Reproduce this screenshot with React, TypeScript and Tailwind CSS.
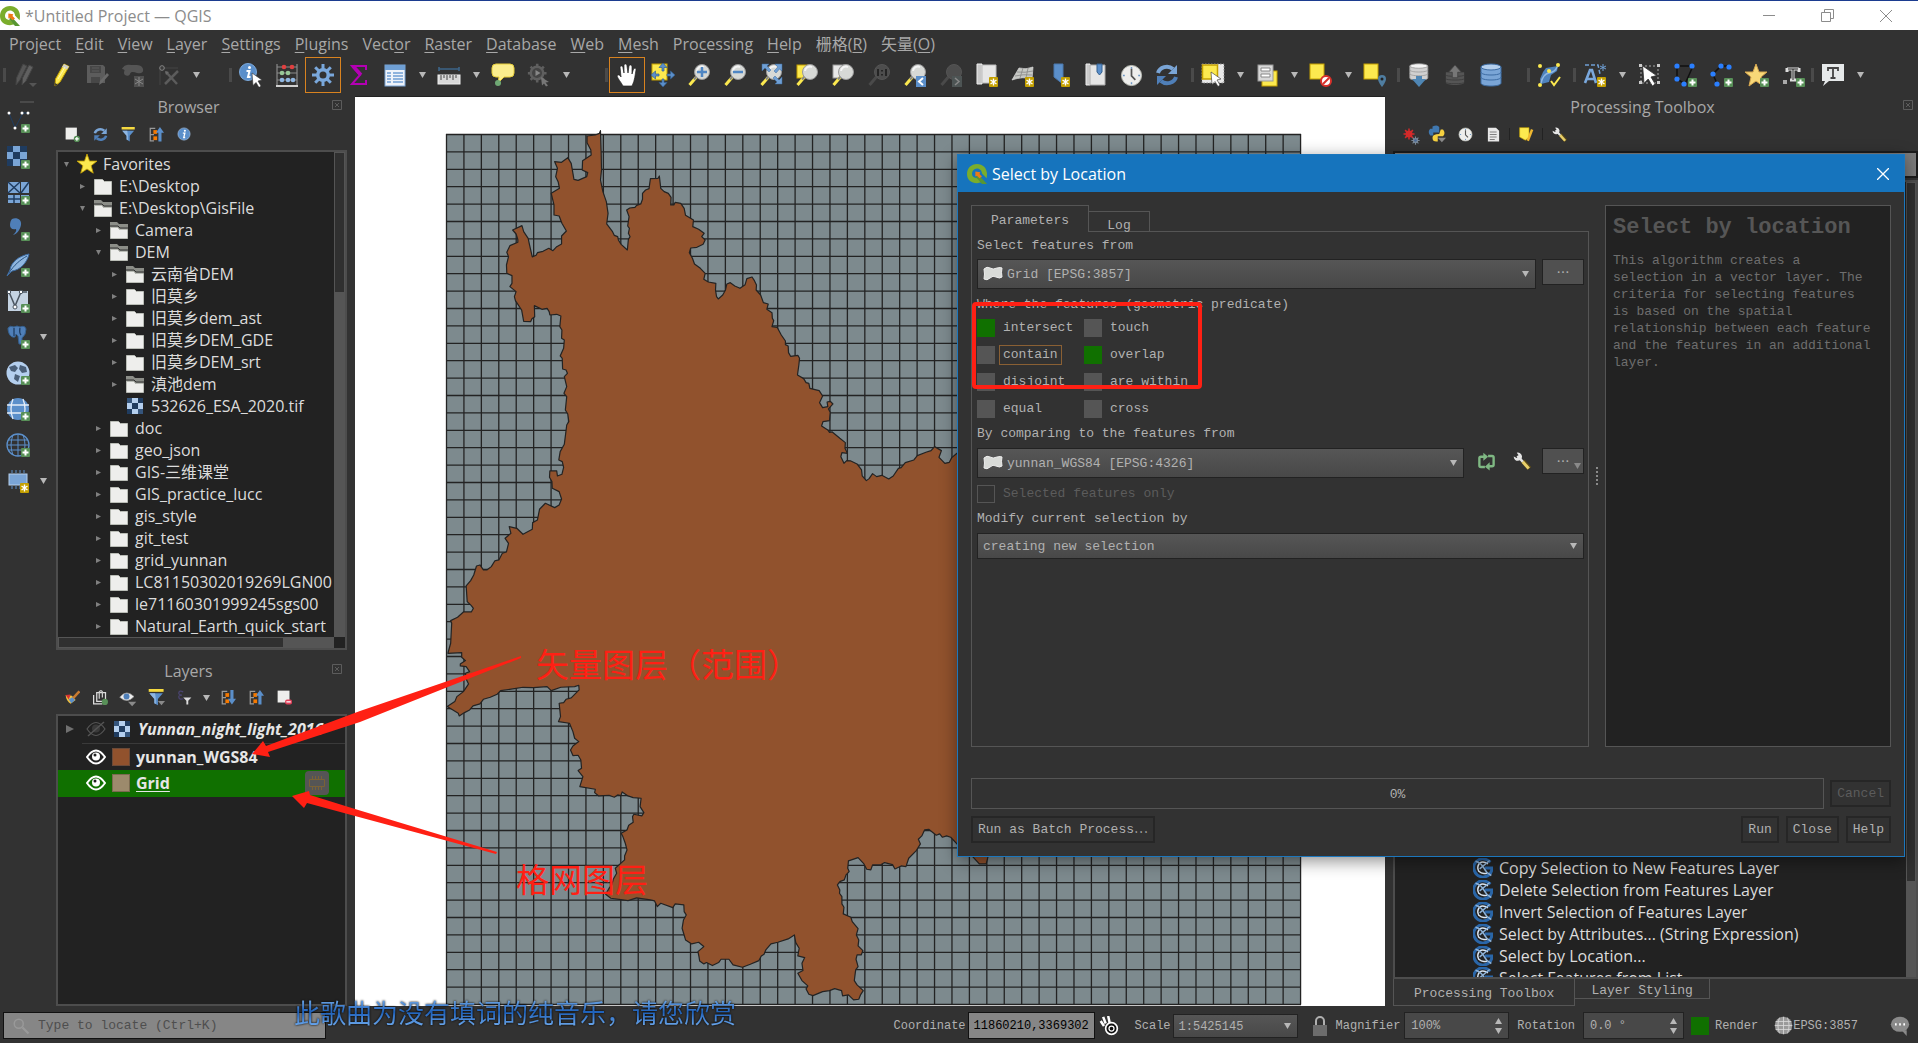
import type { ReactNode } from 'react';
import clsx from 'clsx';

/* ---------- icon primitives, all on a 24x24 grid ---------- */

function Svg({ children, size = 24 }: { children: ReactNode; size?: number }) {
  return (
    <svg width={size} height={size} viewBox="0 0 24 24" fill="none" className="shrink-0">
      {children}
    </svg>
  );
}

function Caret({ up, className = 'fill-[#b8b8b8]' }: { up?: boolean; className?: string }) {
  return (
    <svg width="7" height="6" viewBox="0 0 7 6" className={clsx('shrink-0', className)}>
      <path d={up ? 'M3.5 0L7 6H0z' : 'M0 0h7L3.5 6z'} />
    </svg>
  );
}

const Plus = () => (
  <g>
    <rect x="15" y="15" width="9" height="9" rx="1" fill="#589058" />
    <path d="M19.500 16.500v6M16.500 19.500h6" stroke="#fff" strokeWidth="2" />
  </g>
);

const Spark = () => (
  <g>
    <rect x="14" y="14" width="9" height="10" rx="1" fill="#c4a000" />
    <path d="M18.500 15.500v7M15.500 17l6 4M21.500 17l-6 4" stroke="#fff" strokeWidth="1.400" />
  </g>
);

function Lens({ dim, children, behind }: { dim?: boolean; children?: ReactNode; behind?: ReactNode }) {
  return (
    <Svg>
      {behind}
      <path d="M9 14.500L2.500 22" stroke={dim ? '#4a4a4a' : '#fce94f'} strokeWidth="3" />
      <path d="M10 13L7 16.500" stroke={dim ? '#4a4a4a' : '#888'} strokeWidth="2" />
      <circle cx="15" cy="9" r="7.500" fill={dim ? '#4d4d4d' : '#d7d9d6'} stroke={dim ? '#555' : '#999'} />
      {!dim && <path d="M10 8a5 5 0 0 1 7-4" stroke="#f4f4f4" strokeWidth="2" />}
      {children}
    </Svg>
  );
}

const gearTeeth = 'M12 1v22M1 12h22M4.200 4.200l15.600 15.600M19.800 4.200L4.200 19.800';

function Gear({ color, hole, size = 24 }: { color: string; hole: string; size?: number }) {
  return (
    <Svg size={size}>
      <path d={gearTeeth} stroke={color} strokeWidth="3" />
      <circle cx="12" cy="12" r="7" fill={color} />
      <circle cx="12" cy="12" r="3.500" fill={hole} />
    </Svg>
  );
}

const Cursor = ({ x = 12, y = 10 }: { x?: number; y?: number }) => (
  <path
    transform={`translate(${x} ${y})`}
    d="M0 0l10 7-4 1 3 5-2 1.500-3-5-3 3z"
    fill="#fff"
    stroke="#333"
    strokeWidth=".6"
  />
);

const Pencil = ({ color = '#fce94f', dark = '#c4a000' }) => (
  <g>
    <path d="M15 1l5 2.500L11 19l-5 4 .5-7z" fill={color} stroke={dark} />
    <path d="M15 1l5 2.500-2 3-5-2.500z" fill="#d0d0c8" />
    <path d="M9 16l7-12" stroke="#fff7b0" />
    <path d="M6 23l.3-3 2.200 1.400z" fill="#333" />
  </g>
);

const Database = ({ color = '#7aa5d6', line = '#3d6ca3', top = '#b4cfee' }) => (
  <g fill={color} stroke={line}>
    <path d="M2 4v16c0 2 4.500 3 10 3s10-1 10-3V4z" />
    <ellipse cx="12" cy="4" rx="10" ry="3" fill={top} />
    <path d="M2 9c0 2 4.500 3 10 3s10-1 10-3M2 14c0 2 4.500 3 10 3s10-1 10-3" fill="none" />
  </g>
);

function RefreshIcon({ size = 24 }: { size?: number }) {
  return (
    <Svg size={size}>
      <path d="M3 10a9 8 0 0 1 15-4" stroke="#7aa5d6" strokeWidth="4" />
      <path d="M22 2v9h-9z" fill="#7aa5d6" />
      <path d="M21 14a9 8 0 0 1-15 4" stroke="#4f7fb8" strokeWidth="4" />
      <path d="M2 22v-9h9z" fill="#4f7fb8" />
    </Svg>
  );
}

function InfoIcon({ size = 24 }: { size?: number }) {
  return (
    <Svg size={size}>
      <circle cx="12" cy="12" r="10.500" fill="#5b8fca" stroke="#a9c6e8" />
      <circle cx="13.500" cy="6.500" r="1.800" fill="#fff" />
      <path d="M10 10.500h3.500L11.500 18h2.500" stroke="#fff" strokeWidth="2.200" />
    </Svg>
  );
}

function ClockIcon({ size = 24 }: { size?: number }) {
  return (
    <Svg size={size}>
      <circle cx="12" cy="12" r="10.500" fill="#eeeeec" stroke="#babdb6" />
      <path d="M12 3v2M12 19v2M3 12h2M19 12h2" stroke="#6d97c4" strokeWidth="1.500" />
      <path d="M12 5v7.500l4 4" stroke="#555" strokeWidth="1.800" />
    </Svg>
  );
}

function FunnelIcon({ size = 24, drop }: { size?: number; drop?: boolean }) {
  return (
    <Svg size={size}>
      <rect x="1" y="0" width="21" height="4" fill="#f5d940" />
      <path d="M2 6h19l-7 8v9l-5-3v-6z" fill="#5b8fca" />
      <path d="M2 6h8l1 8v7l-2-1v-6z" fill="#90b7e2" />
      {drop && <path d="M14 17h10l-5 6z" fill="#8a8a8a" />}
    </Svg>
  );
}

function TreeArrowIcon({ down }: { down?: boolean }) {
  return (
    <Svg size={15}>
      <path d="M2 1v22M2 2h8M2 12h6M2 22h6" stroke="#9a9a9a" strokeWidth="2" />
      <rect x="7" y="5" width="6" height="6" fill="#f57900" />
      <rect x="7" y="15" width="6" height="6" fill="#f57900" />
      {down ? (
        <path d="M15 0h5v14h4l-6.500 9L11 14h4z" fill="#5b8fca" />
      ) : (
        <path d="M15 23h5V9h4L17.500 0 11 9h4z" fill="#5b8fca" />
      )}
    </Svg>
  );
}

function WrenchIcon({ size = 18 }: { size?: number }) {
  return (
    <Svg size={size}>
      <path d="M13 12l9 10" stroke="#5a4a18" strokeWidth="6" />
      <path d="M13 13l8 9" stroke="#e8cf6a" strokeWidth="4" />
      <path d="M6 5l7 8" stroke="#e6e6e6" strokeWidth="3.500" />
      <path d="M5 1a5.500 5.500 0 1 1-4 5l4 2 3-3z" fill="#e6e6e6" />
    </Svg>
  );
}

function QgisLogo() {
  return (
    <Svg size={20}>
      <path d="M12 0C5 0 0 5 0 12s5 11 12 11c2 0 3.500-.4 5-1l-4.500-5C8.500 17 6 15 6 12s2.500-6.500 6-6.500 6 3 6 6l5.500 5.500c.3-1.500.5-3 .5-5C24 5 19 0 12 0z" fill="#7aad2c" />
      <path d="M13 12l11 12h-6l-7-8z" fill="#589632" />
      <path d="M10 9l6 1-1 2 3 3-3 2-3-3-2 1z" fill="#ee7913" />
    </Svg>
  );
}

const Dots = ({ points }: { points: number[][] }) => (
  <g fill="#2a7fff">
    {points.map(([x, y]) => (
      <circle key={`${x}-${y}`} cx={x} cy={y} r="2.600" />
    ))}
  </g>
);

/* ---------- toolbar ---------- */

function ToolButton({ label, active, children }: { label: string; active?: boolean; children: ReactNode }) {
  return (
    <button
      type="button"
      aria-label={label}
      className={clsx('flex h-9 w-9 shrink-0 items-center justify-center', active && 'border border-[#d8821f]')}
    >
      {children}
    </button>
  );
}

const Drop = () => (
  <button type="button" aria-label="More" className="flex h-9 w-[18px] shrink-0 items-center justify-center">
    <Caret />
  </button>
);

const Handle = () => <span className="mr-px h-[14px] w-[3px] shrink-0 bg-[#4a4a4a]" />;

function MainToolbar() {
  return (
    <div className="flex h-[39px] shrink-0 items-center overflow-hidden pb-[3px] pl-[3px]">
      <div className="flex items-center">
        <Handle />
        <ToolButton label="Current Edits">
          <Svg>
            <path d="M10 1l4 2-7 14-4 5 .5-7z" fill="#565656" stroke="#444" />
            <path d="M16 2l4 2-7 14-4 4 .5-7z" fill="#606060" stroke="#444" />
            <path d="M16 20h8l-4 4z" fill="#555" />
          </Svg>
        </ToolButton>
        <ToolButton label="Toggle Editing"><Svg><Pencil /></Svg></ToolButton>
        <ToolButton label="Save Layer Edits">
          <Svg>
            <path d="M2 2h16l2 2v16H2z" fill="#5c5c5c" />
            <path d="M5 3h11v7H5zM6 14h9v6H6z" fill="#474747" />
            <path d="M7 5h7M7 8h7" stroke="#5c5c5c" />
            <path d="M22 10l2 2-7 8-3 2 1-4z" fill="#6a6a6a" />
          </Svg>
        </ToolButton>
        <ToolButton label="Add Polygon">
          <Svg>
            <path d="M1 6c3-6 8-4 12-4s8 0 9 4-3 5-6 4-6-2-7 1-6 2-6-1 2-3-2-4z" fill="#555" />
            <rect x="13" y="13" width="10" height="11" fill="#505050" />
            <path d="M18 14v9M14 16l8 5M22 16l-8 5" stroke="#888" />
          </Svg>
        </ToolButton>
        <ToolButton label="Vertex Tool">
          <Svg>
            <path d="M3 22V5h18" stroke="#444" />
            <circle cx="5" cy="5" r="2.300" stroke="#888" />
            <path d="M8 21L21 8M9 9l11 12" stroke="#5c5c5c" strokeWidth="2.500" />
            <path d="M8 8l4 1-3 3z" fill="#6a6a6a" />
          </Svg>
        </ToolButton>
        <Drop />
      </div>

      <div className="ml-6 flex items-center">
        <Handle />
        <ToolButton label="Identify Features">
          <Svg>
            <circle cx="9" cy="9" r="8.500" fill="#5b8fca" stroke="#7ba8da" />
            <circle cx="10.500" cy="4.500" r="1.500" fill="#fff" />
            <path d="M7.500 8h3L9 14h2.500" stroke="#fff" strokeWidth="2" />
            <Cursor x={13} y={10} />
          </Svg>
        </ToolButton>
        <ToolButton label="Field Calculator">
          <Svg>
            <path d="M2 1v21M22 1v21M2 4h20M2 10h20M2 17h20" stroke="#8a8a8a" strokeWidth="1.200" />
            <path d="M1 23h22" stroke="#d0d0d0" strokeWidth="2" />
            <g fill="#e04040"><circle cx="9" cy="4" r="2.300" /><circle cx="17" cy="4" r="2.300" /></g>
            <g fill="#98c898"><circle cx="7" cy="10" r="2.300" /><circle cx="13" cy="10" r="2.300" /></g>
            <g fill="#90b7e2"><circle cx="7" cy="17" r="2.300" /><circle cx="13" cy="17" r="2.300" /><circle cx="18" cy="17" r="2.300" /></g>
          </Svg>
        </ToolButton>
        <ToolButton label="Toolbox" active><Gear color="#7aa8dc" hole="#323232" /></ToolButton>
        <ToolButton label="Statistical Summary">
          <Svg>
            <path d="M19 7V3H5l8 9-8 9h14v-4" stroke="#b400b4" strokeWidth="2" />
            <path d="M6 3l8 9" stroke="#b400b4" strokeWidth="3.500" />
          </Svg>
        </ToolButton>
        <ToolButton label="Attribute Table">
          <Svg>
            <rect x="2" y="2" width="20" height="21" fill="#eef3fa" stroke="#7aa5d6" />
            <rect x="2" y="2" width="20" height="5" fill="#6f9fd4" />
            <path d="M4 10h4M10 10h10M4 13h4M10 13h10M4 16h4M10 16h10M4 19h4M10 19h10" stroke="#6f9fd4" strokeWidth="1.500" />
          </Svg>
        </ToolButton>
        <Drop />
        <ToolButton label="Measure">
          <Svg>
            <path d="M2 6h20M2 4v4M22 4v4" stroke="#3d6488" strokeWidth="1.600" />
            <rect x="1" y="12" width="22" height="9" fill="#d8d8d8" stroke="#eee" />
            <path d="M4 12v5M7 12v3M10 12v5M13 12v3M16 12v5M19 12v3" stroke="#444" />
          </Svg>
        </ToolButton>
        <Drop />
        <ToolButton label="Map Tips">
          <Svg>
            <path d="M5 1h14q4 0 4 4v5q0 4-4 4h-6l-6 6 1-6H5q-4 0-4-4V5q0-4 4-4z" fill="#fbee8e" stroke="#e8cf3a" />
            <circle cx="7" cy="20" r="3" fill="#6fa874" />
          </Svg>
        </ToolButton>
        <ToolButton label="Run Feature Action">
          <Svg>
            <path d={gearTeeth} stroke="#5f5f5f" strokeWidth="3" transform="scale(.85)" />
            <circle cx="10" cy="10" r="7.500" fill="#5f5f5f" />
            <circle cx="10" cy="10" r="5" fill="#444" />
            <path d="M8.500 7l5 3-5 3z" fill="#888" />
            <path d="M14 14l8 5-3.500.5 2.500 3-2 1-2-3-2 2z" fill="#777" />
          </Svg>
        </ToolButton>
        <Drop />
      </div>

      <div className="ml-7.5 flex items-center">
        <Handle />
        <ToolButton label="Pan Map" active>
          <Svg>
            <path d="M8 23c-2-4-5-7-6-10 1-2 3-1 4 1L5 4c1-2 3-1 3 1l1 5V2c1-2 3-1 3 1l1 7 1-7c1-2 3-1 3 1v7l1.500-5c1-1 3-1 2.500 1-1 5-1 10-4 16z" fill="#fff" stroke="#222" strokeWidth=".7" />
          </Svg>
        </ToolButton>
        <ToolButton label="Pan Map to Selection">
          <Svg>
            <rect x="1" y="1" width="15" height="16" fill="#fce94f" stroke="#c4a000" />
            <path d="M12 0l4 4.500h-3V8h-2V4.500H8zM12 24l-4-4.500h3V16h2v3.500h3zM0 12l4.500-4v3H8v2H4.500v3zM24 12l-4.500 4v-3H16v-2h3.500V8z" fill="#5b8fca" stroke="#35608f" strokeWidth=".7" />
          </Svg>
        </ToolButton>
        <ToolButton label="Zoom In"><Lens><path d="M15 4v10M10 9h10" stroke="#4f86c4" strokeWidth="2.500" /></Lens></ToolButton>
        <ToolButton label="Zoom Out"><Lens><path d="M10 9h10" stroke="#4f86c4" strokeWidth="2.500" /></Lens></ToolButton>
        <ToolButton label="Zoom Full">
          <Lens>
            <path d="M3 1h7L8 3l4 4-2 2-4-4-3 3zM23 1v7l-2.500-2L17 10l-2-2 4-4-3-3zM23 21h-7l2-2-4-4 2-2 4 4 3-3z" fill="#6f9fd4" stroke="#3d6ca3" strokeWidth=".5" />
          </Lens>
        </ToolButton>
        <ToolButton label="Zoom to Selection"><Lens behind={<rect x="2" y="2" width="12" height="13" fill="#fce94f" stroke="#c4a000" />} /></ToolButton>
        <ToolButton label="Zoom to Layer"><Lens behind={<rect x="2" y="2" width="12" height="13" fill="#e8e8e8" stroke="#999" />} /></ToolButton>
        <ToolButton label="Zoom to Native Resolution">
          <Lens dim><path d="M11 6v7M19 6v7M15 7v1.500M15 11v1.500" stroke="#222" strokeWidth="1.800" /></Lens>
        </ToolButton>
        <ToolButton label="Zoom Last">
          <Lens>
            <rect x="13" y="13" width="10" height="11" fill="#5b8fca" />
            <path d="M20 15l-4 3.500 4 3.500" stroke="#fff" strokeWidth="2" />
          </Lens>
        </ToolButton>
        <ToolButton label="Zoom Next">
          <Lens dim>
            <rect x="13" y="13" width="10" height="11" fill="#4d5454" />
            <path d="M16 15l4 3.500-4 3.500" stroke="#888" strokeWidth="1.500" />
          </Lens>
        </ToolButton>
        <ToolButton label="New Map View">
          <Svg><path d="M2 1h5v20H2z" fill="#c8c8c8" stroke="#eee" /><path d="M7 2h14v18H7z" fill="#e6e6e6" stroke="#bbb" /><Spark /></Svg>
        </ToolButton>
        <ToolButton label="New 3D Map View">
          <Svg>
            <path d="M8 5q7 2 14-1l-1 12q-9-3-20 1z" fill="#c6c8c4" stroke="#ddd" strokeWidth=".7" />
            <path d="M6 9q8 1 16-1M4 13q8-2 17-1M12 5L9 15M17 5l-2 10" stroke="#888" strokeWidth=".8" />
            <Spark />
          </Svg>
        </ToolButton>
        <ToolButton label="New Spatial Bookmark">
          <Svg><path d="M7 1h9v20l-4-3-5-4z" fill="#5b8fca" stroke="#4a78ad" /><Spark /></Svg>
        </ToolButton>
        <ToolButton label="Show Spatial Bookmarks">
          <Svg>
            <path d="M3 1h4v21H3z" fill="#ccc" stroke="#eee" />
            <path d="M7 2h15v20H7z" fill="#e6e6e6" stroke="#aaa" />
            <path d="M14 1h5v8l-2.500 3L14 9z" fill="#5b8fca" stroke="#35608f" />
          </Svg>
        </ToolButton>
        <ToolButton label="Temporal Controller"><ClockIcon size={23} /></ToolButton>
        <ToolButton label="Refresh"><RefreshIcon /></ToolButton>
      </div>

      <div className="ml-1.5 flex items-center">
        <Handle />
        <ToolButton label="Select Features">
          <Svg>
            <rect x="1" y="1" width="22" height="19" fill="#e8e8e8" stroke="#888" strokeDasharray="1.500 1.500" />
            <rect x="1.500" y="2" width="15" height="14" fill="#fce94f" stroke="#c4a000" strokeWidth="1.500" />
            <Cursor x={10} y={9} />
          </Svg>
        </ToolButton>
        <Drop />
        <ToolButton label="Select by Value">
          <Svg>
            <rect x="7" y="8" width="15" height="15" fill="#fce94f" stroke="#c4a000" />
            <rect x="3" y="2" width="15" height="16" fill="#d8d8d8" stroke="#999" />
            <path d="M6 5h9v3H6zM6 11h9v3H6z" fill="#fff" stroke="#888" />
          </Svg>
        </ToolButton>
        <Drop />
        <ToolButton label="Deselect Features">
          <Svg>
            <rect x="1" y="1" width="14" height="15" fill="#fce94f" stroke="#c4a000" />
            <circle cx="17" cy="18" r="5" fill="#fff" stroke="#d8302a" strokeWidth="2" />
            <path d="M14 21l6-6" stroke="#d8302a" strokeWidth="2" />
          </Svg>
        </ToolButton>
        <Drop />
        <ToolButton label="Select by Location">
          <Svg>
            <rect x="1" y="1" width="14" height="15" fill="#fce94f" stroke="#c4a000" />
            <path d="M19 12a4 4 0 0 1 4 4c0 3-4 8-4 8s-4-5-4-8a4 4 0 0 1 4-4z" fill="#4f7da0" />
            <circle cx="19" cy="16" r="1.500" fill="#222" />
          </Svg>
        </ToolButton>
      </div>

      <div className="ml-1 flex items-center">
        <Handle />
        <ToolButton label="Import Layer">
          <Svg>
            <g transform="translate(1 0) scale(.9 .75)"><Database color="#d0d0d0" line="#9a9a9a" top="#f4f4f4" /></g>
            <path d="M9 13h6v3h4l-7 8-7-8h4z" fill="#4f86b4" />
          </Svg>
        </ToolButton>
        <ToolButton label="Export Layer">
          <Svg size={22}>
            <path d="M2 9v11c0 2 4.500 3 10 3s10-1 10-3V9z" fill="#555" />
            <path d="M2 12c0 2 20 2 20 0M2 16c0 2 20 2 20 0M2 20c0 2 20 2 20 0" stroke="#3c3c3c" />
            <path d="M12 1l7 8h-4v6H9V9H5z" fill="#777" stroke="#444" />
          </Svg>
        </ToolButton>
        <ToolButton label="DB Manager"><Svg><Database /></Svg></ToolButton>
      </div>

      <div className="ml-[18px] flex items-center">
        <Handle />
        <ToolButton label="Check Geometry">
          <Svg>
            <path d="M9 5l12-2-1 5-6 4-2 7-8 2-1-5 3-7z" fill="#4f83bd" />
            <path d="M4 20q2-9 8-10t8-6" stroke="#90b7e2" strokeWidth="1.500" />
            <g fill="#fce94f"><circle cx="3" cy="3" r="2" /><circle cx="21" cy="2" r="2" /><circle cx="12" cy="8" r="2" /><circle cx="3" cy="22" r="2" /></g>
            <path d="M14 18l3 4 6-8" stroke="#fce94f" strokeWidth="2" />
          </Svg>
        </ToolButton>
      </div>

      <div className="ml-1.5 flex items-center">
        <Handle />
        <ToolButton label="New Annotation Layer">
          <Svg>
            <path d="M2 2h13l2 9" stroke="#6f9fd4" strokeWidth="1.500" strokeDasharray="4 2" />
            <path d="M2 20L7 7h2l4 13M4 16h7" stroke="#7aa8dc" strokeWidth="2.600" />
            <path d="M20 1v7M17 3l6 3M23 3l-6 3" stroke="#6f9fd4" />
            <Spark />
          </Svg>
        </ToolButton>
        <Drop />
        <ToolButton label="Modify Annotations">
          <Svg>
            <rect x="4" y="3" width="17" height="17" stroke="#aaa" strokeDasharray="2 2" />
            <g fill="#ccc"><rect x="2" y="1" width="3" height="3" /><rect x="20" y="1" width="3" height="3" /><rect x="2" y="18" width="3" height="3" /><rect x="20" y="18" width="3" height="3" /></g>
            <g transform="scale(1.400)"><Cursor x={4} y={2} /></g>
          </Svg>
        </ToolButton>
        <ToolButton label="Polygon Annotation">
          <Svg><path d="M4 3h16l-8 18-8-5z" stroke="#111" strokeWidth="1.500" /><Dots points={[[4, 3], [19, 3], [4, 16], [11, 21]]} /><Plus /></Svg>
        </ToolButton>
        <ToolButton label="Line Annotation">
          <Svg><path d="M20 3h-8l-8 8 4 10" stroke="#111" strokeWidth="1.500" /><Dots points={[[12, 3], [20, 4], [4, 11], [8, 21]]} /><Plus /></Svg>
        </ToolButton>
        <ToolButton label="Marker Annotation">
          <Svg><path d="M11 1l3 8h8l-6 5 2 9-7-5-7 5 2-9-6-5h8z" fill="#f8d878" stroke="#d8a850" /><Plus /></Svg>
        </ToolButton>
        <ToolButton label="Text Annotation">
          <Svg>
            <path d="M6 6h12M6 5v4M18 5v4M12 6v11M9 17h6" stroke="#ddd" strokeWidth="3" />
            <path d="M12 6v11M7 6h10" stroke="#222" />
            <rect x="2" y="17" width="4" height="4" fill="#aaa" />
            <Plus />
          </Svg>
        </ToolButton>
        <Handle />
        <ToolButton label="Text Annotation At Point">
          <Svg>
            <path d="M1 1h22v17H8l-6 5 2-5H1z" fill="#e6e9ea" />
            <path d="M7 5h10M7 4v4M17 4v4M12 5v10M9.500 15h5" stroke="#444" strokeWidth="1.800" />
          </Svg>
        </ToolButton>
        <Drop />
      </div>
    </div>
  );
}

function LayerSourceBar() {
  return (
    <div className="flex w-14 shrink-0 flex-col">
      <span className="mt-[5px] ml-5 h-[2px] w-[14px] bg-[#4a4a4a]" />
      <SourceButton label="Add Vector Layer">
        <path d="M3 4l6 15L17 4h5" stroke="#1f3c60" />
        <g fill="#fff"><circle cx="3" cy="4" r="1.500" /><circle cx="9" cy="19" r="1.500" /><circle cx="16" cy="4" r="1.500" /><circle cx="22" cy="4" r="1.500" /></g>
        <Plus />
      </SourceButton>
      <SourceButton label="Add Raster Layer">
        <rect x="1" y="1" width="20" height="20" fill="#1f3c60" />
        <path d="M7 1h7v6H7zM1 7h6v7H1zM14 7h7v7h-7zM7 14h7v7H7z" fill="#7aa5d6" />
        <Plus />
      </SourceButton>
      <SourceButton label="Add Mesh Layer">
        <path d="M2 1h12v11H2zM15 1h8v11h-8zM2 14h12v8H2zM15 14h8v8h-8z" fill="#7aa5d6" />
        <path d="M2 1l12 11M14 1L2 12M23 1l-8 11M2 18h12M8 14v8" stroke="#1f3c60" strokeWidth="1.500" />
        <Plus />
      </SourceButton>
      <SourceButton label="Add Delimited Text Layer">
        <path d="M6 2c5-2 10 1 9 6s-4 9-8 10c2-2 4-4 3-6-4 1-6-1-6-4s1-5 2-6z" fill="#4f7fb8" />
        <Plus />
      </SourceButton>
      <SourceButton label="Add SpatiaLite Layer">
        <path d="M23 1C13 3 5 9 4 17l-3 6 5-5c8-1 15-8 17-17z" fill="#8fb6df" stroke="#3d6ca3" />
        <path d="M3 20C8 12 14 7 21 3" stroke="#2a5584" />
        <Plus />
      </SourceButton>
      <SourceButton label="Add Virtual Layer">
        <path d="M2 2h20v20H2z" fill="#c4d3e2" />
        <path d="M3 3l6 14L15 3h6" stroke="#4a5560" strokeWidth="1.500" />
        <g fill="#fff" stroke="#4a5560"><circle cx="3" cy="3" r="1.700" /><circle cx="9" cy="18" r="2" /><circle cx="15" cy="3" r="1.700" /></g>
        <Plus />
      </SourceButton>
      <SourceButton label="Add PostGIS Layer" menu>
        <path d="M2 3q2-3 6-1 3-2 6 0 5-2 6 2 0 6-4 9v6h-3l-1-8-2-2-1 3c-4 1-7-3-7-9z" fill="#4f7fb8" stroke="#35608f" />
        <path d="M8 3v8M14 3q-1 5 1 7" stroke="#1f3c60" strokeWidth="1.300" />
        <Plus />
      </SourceButton>
      <SourceButton label="Add WMS Layer">
        <circle cx="12" cy="12" r="11.500" fill="#b4cfee" />
        <path d="M3 6l6-2 3 3-3 4-4-1zM14 4l6 2 1 5-5 1-3-4zM9 13l5 2-2 6-4-3z" fill="#4a5f78" />
        <Plus />
      </SourceButton>
      <SourceButton label="Add WFS Layer">
        <circle cx="12" cy="12" r="11" fill="#5b8fca" />
        <path d="M1 8h22M1 16h22M7 2q-4 10 0 20M17 2q4 10 0 20" stroke="#e6eef8" strokeWidth="1.300" />
        <Plus />
      </SourceButton>
      <SourceButton label="Add WCS Layer">
        <circle cx="12" cy="12" r="11" stroke="#5b8fca" strokeWidth="1.300" />
        <path d="M2 7h20M1 12h22M2 17h20M12 1v22M7 2q-4 10 0 20M17 2q4 10 0 20" stroke="#5b8fca" />
        <Plus />
      </SourceButton>
      <SourceButton label="New Temporary Layer" menu>
        <path d="M6 1v3M10 1v3M14 1v3M18 1v3M6 17v3M10 17v3M14 17v3" stroke="#5b8fca" />
        <rect x="3" y="5" width="18" height="11" fill="#7aa5d6" stroke="#b4cfee" />
        <Spark />
      </SourceButton>
    </div>
  );
}

function SourceButton({ label, menu, children }: { label: string; menu?: boolean; children: ReactNode }) {
  return (
    <div className="flex h-9 items-center">
      <button type="button" aria-label={label} className="flex h-9 w-9 items-center justify-center">
        <Svg>{children}</Svg>
      </button>
      {menu && (
        <button type="button" aria-label={`${label} menu`} className="ml-1">
          <Caret />
        </button>
      )}
    </div>
  );
}

/* ---------- docks ---------- */

function DockTitle({ title }: { title: string }) {
  return (
    <div className="flex h-[22px] shrink-0 items-center">
      <h2 className="flex-1 text-center text-[16px] text-[#a8a8a8]">{title}</h2>
      <button type="button" aria-label={`Close ${title}`} className="mb-1 w-[26px] pl-[11px]">
        <svg width="10" height="10" viewBox="0 0 10 10" fill="none" stroke="#5c5c5c">
          <path d="M.5.5h9v9h-9zM3 3l4 4M7 3L3 7" />
        </svg>
      </button>
    </div>
  );
}

function MiniButton({ label, children }: { label: string; children: ReactNode }) {
  return (
    <button type="button" aria-label={label} className="flex h-7 w-7 items-center justify-center">
      {children}
    </button>
  );
}

const Folder = ({ open }: { open?: boolean }) => (
  <svg width="18" height="17" viewBox="0 0 18 17" className="shrink-0">
    {open && <path d="M0 0h7l2 2h9v5H0z" fill="#8c8e88" />}
    {open && <path d="M0 4h8l2 2h8" stroke="#333" fill="none" />}
    <path d={open ? 'M.5 5.500h7l2 2h8v9H.5z' : 'M.5 1.500h8l2 2h7v13H.5z'} fill="#eeeeec" stroke="#babdb6" />
  </svg>
);

const RasterIcon = () => (
  <svg width="16" height="16" viewBox="0 0 16 16" className="shrink-0">
    <rect width="16" height="16" fill="#1f3c60" />
    <path d="M5 0h6v5H5zM0 5h5v6H0zM11 5h5v6h-5zM5 11h6v5H5z" fill="#b4cfee" />
    <path d="M0 0h5v5H0zM11 11h5v5h-5z" fill="#35557c" />
  </svg>
);

type Node = { name: string; level: number; open?: boolean; icon?: 'star' | 'folder' | 'linked' | 'raster' };

const tree: Node[] = [
  { name: 'Favorites', level: 0, open: true, icon: 'star' },
  { name: 'E:\\Desktop', level: 1, icon: 'folder' },
  { name: 'E:\\Desktop\\GisFile', level: 1, open: true, icon: 'linked' },
  { name: 'Camera', level: 2, icon: 'linked' },
  { name: 'DEM', level: 2, open: true, icon: 'linked' },
  { name: '云南省DEM', level: 3, icon: 'linked' },
  { name: '旧莫乡', level: 3, icon: 'folder' },
  { name: '旧莫乡dem_ast', level: 3, icon: 'folder' },
  { name: '旧莫乡DEM_GDE', level: 3, icon: 'folder' },
  { name: '旧莫乡DEM_srt', level: 3, icon: 'folder' },
  { name: '滇池dem', level: 3, icon: 'linked' },
  { name: '532626_ESA_2020.tif', level: 3, icon: 'raster' },
  { name: 'doc', level: 2, icon: 'folder' },
  { name: 'geo_json', level: 2, icon: 'folder' },
  { name: 'GIS-三维课堂', level: 2, icon: 'folder' },
  { name: 'GIS_practice_lucc', level: 2, icon: 'folder' },
  { name: 'gis_style', level: 2, icon: 'folder' },
  { name: 'git_test', level: 2, icon: 'folder' },
  { name: 'grid_yunnan', level: 2, icon: 'folder' },
  { name: 'LC81150302019269LGN00', level: 2, icon: 'folder' },
  { name: 'le71160301999245sgs00', level: 2, icon: 'folder' },
  { name: 'Natural_Earth_quick_start', level: 2, icon: 'folder' },
];

const indent = ['pl-1.5', 'pl-[22px]', 'pl-[38px]', 'pl-[54px]'];

function TreeRow({ node }: { node: Node }) {
  return (
    <li className={clsx('flex h-[22px] items-center whitespace-nowrap', indent[node.level])}>
      <span className="flex w-[14px] shrink-0">
        {node.icon !== 'raster' && (
          <svg width="5" height="5" viewBox="0 0 5 5" fill="#808080">
            <path d={node.open ? 'M0 0h5L2.500 5z' : 'M0 0l5 2.500L0 5z'} />
          </svg>
        )}
      </span>
      <span className="flex w-[18px] shrink-0 justify-center">
        {node.icon === 'star' && (
          <Svg size={20}>
            <path d="M12 0l3 8.500h9l-7 5.500 2.500 9L12 18l-7.500 5L7 14 0 8.500h9z" fill="#fce94f" stroke="#c4a000" />
          </Svg>
        )}
        {node.icon === 'raster' && <RasterIcon />}
        {(node.icon === 'folder' || node.icon === 'linked') && <Folder open={node.icon === 'linked'} />}
      </span>
      <span className="ml-[7px]">{node.name}</span>
    </li>
  );
}

const Eye = ({ hidden }: { hidden?: boolean }) => (
  <svg width="20" height="16" viewBox="0 0 20 16" fill="none" className="shrink-0">
    <path d="M1 8q9-13 18 0-9 13-18 0z" stroke={hidden ? '#555' : '#fff'} strokeWidth={hidden ? 1.2 : 2} />
    <circle cx="10" cy="7.500" r="4" fill={hidden ? '#3a3a3a' : '#fff'} />
    {!hidden && <circle cx="9" cy="6" r="1.500" fill="#222" />}
    {hidden && <path d="M2 15L18 1" stroke="#555" strokeWidth="1.500" />}
  </svg>
);

function LeftDock() {
  return (
    <div className="mr-2 flex w-[291px] shrink-0 flex-col text-[16px]">
      <DockTitle title="Browser" />
      <div className="flex h-8 shrink-0 items-center pl-0.5">
        <MiniButton label="Add Selected Layers">
          <Svg size={15}><rect x="1" y="1" width="18" height="19" fill="#eeeeec" /><circle cx="19" cy="19" r="5" fill="#589058" /><path d="M19 16v6M16 19h6" stroke="#fff" strokeWidth="2" /></Svg>
        </MiniButton>
        <MiniButton label="Refresh"><RefreshIcon size={15} /></MiniButton>
        <MiniButton label="Filter Browser"><FunnelIcon size={15} /></MiniButton>
        <MiniButton label="Collapse All"><TreeArrowIcon /></MiniButton>
        <MiniButton label="Properties"><InfoIcon size={14} /></MiniButton>
      </div>
      <div className="flex min-h-0 grow-[501] basis-0 flex-col border-2 border-[#4d4d4d] bg-[#222]">
        <div className="flex min-h-0 flex-1">
          <ul className="min-w-0 flex-1 overflow-hidden pt-px text-[#dcdcdc]">
            {tree.map((node) => (
              <TreeRow key={node.name} node={node} />
            ))}
          </ul>
          <div className="w-[11px] bg-[#555]">
            <div className="h-[29%] border border-[#555] bg-[#303030]" />
          </div>
        </div>
        <div className="mr-[11px] h-[11px] shrink-0 bg-[#555]">
          <div className="h-full w-[82%] border border-[#555] bg-[#303030]" />
        </div>
      </div>

      <div className="h-[10px] shrink-0" />
      <DockTitle title="Layers" />
      <div className="flex h-8 shrink-0 items-center pl-0.5">
        <MiniButton label="Layer Styling">
          <Svg size={15}><path d="M1 8l10 1 6 7-8 6q-7-4-8-14z" fill="#f0c040" /><path d="M1 8l8-1-3 8z" fill="#d83030" /><path d="M6 15l6-4 4 5-6 5z" fill="#5b8fca" /><path d="M13 13L23 2" stroke="#c87a30" strokeWidth="4" /></Svg>
        </MiniButton>
        <MiniButton label="Add Group">
          <Svg size={15}><path d="M1 8v14h14M6 4v14h14V4z" stroke="#ddd" strokeWidth="2" /><path d="M10 14V3q3-4 5 0v9" stroke="#ccc" strokeWidth="2" /><circle cx="19" cy="19" r="5" fill="#589058" /></Svg>
        </MiniButton>
        <MiniButton label="Manage Map Themes">
          <Svg size={18}><path d="M1 11q9-11 19-1-9 10-19 1z" fill="#eee" stroke="#999" /><circle cx="10" cy="10" r="4" fill="#4f7fb8" /><path d="M12 17h11l-5.500 6z" fill="#8a8a8a" /></Svg>
        </MiniButton>
        <MiniButton label="Filter Legend"><FunnelIcon size={17} drop /></MiniButton>
        <MiniButton label="Filter by Expression">
          <Svg size={15}><path d="M10 3Q4 0 3 4t5 4q-6 0-5 4t7 2" stroke="#4a4470" strokeWidth="2" /><path d="M10 12h13l-5 5v6h-3v-6z" fill="#ddd" /></Svg>
        </MiniButton>
        <span className="flex w-4 justify-center"><Caret /></span>
        <MiniButton label="Expand All"><TreeArrowIcon down /></MiniButton>
        <MiniButton label="Collapse All"><TreeArrowIcon /></MiniButton>
        <MiniButton label="Remove Layer">
          <Svg size={15}><rect x="1" y="1" width="19" height="19" fill="#eeeeec" /><rect x="13" y="15" width="11" height="8" rx="3" fill="#e0405a" /><path d="M15 19h7" stroke="#fff" strokeWidth="2" /></Svg>
        </MiniButton>
      </div>
      <ul className="min-h-0 grow-[291] basis-0 overflow-hidden border-2 border-[#4d4d4d] bg-[#222] font-bold text-[#e6e6e6]">
        <li className="flex h-[27px] items-center whitespace-nowrap pl-2">
          <svg width="8" height="8" viewBox="0 0 8 8" fill="#707070"><path d="M0 0l8 4-8 4z" /></svg>
          <span className="ml-3 flex"><Eye hidden /></span>
          <span className="ml-2 flex"><RasterIcon /></span>
          <span className="ml-2 italic">Yunnan_night_light_2016</span>
        </li>
        <li className="ml-6 flex h-[27px] items-center border-t border-[#3a3a3a] pl-1">
          <Eye />
          <span className="ml-1.5 h-[18px] w-[18px] border border-[#6b4a38] bg-[#91522d]" />
          <span className="ml-1.5">yunnan_WGS84</span>
        </li>
        <li className="flex h-[27px] items-center bg-[#107000] pl-7">
          <Eye />
          <span className="ml-1.5 h-[18px] w-[18px] border border-[#7a6a50] bg-[#9c8a6c]" />
          <span className="ml-1.5 underline underline-offset-2">Grid</span>
          <button type="button" aria-label="Temporary layer" className="mr-4 ml-auto flex h-6 w-6 items-center justify-center rounded-sm bg-[#555]">
            <svg width="18" height="16" viewBox="0 0 18 16" fill="none" stroke="#7a6236">
              <path d="M1.500 4.500h15v7h-15zM4.500 1v3M7.500 1v3M10.500 1v3M13.500 1v3M4.500 12v3M7.500 12v3M10.500 12v3M13.500 12v3" />
            </svg>
          </button>
        </li>
      </ul>
    </div>
  );
}

/* ---------- map ---------- */

// province outline, digitised on its own 3x grid
const outline =
  '495,62 497,130 498,180 495,210 502,245 512,275 517,310 513,342 530,365 535,376 545,380 547,390 555,403 573,420 576,388 581,380 576,370 579,355 574,348 578,320 571,300 580,294 595,292 600,286 612,282 617,268 617,250 626,240 636,236 640,206 662,205 666,198 670,235 680,245 692,250 700,262 699,285 708,285 712,277 728,280 738,295 742,316 765,330 763,350 780,358 796,370 789,380 799,390 793,403 775,412 757,414 753,428 762,445 768,462 785,475 799,490 795,508 808,516 830,520 829,540 832,560 837,567 850,555 858,540 862,522 872,518 885,528 900,535 915,524 920,506 935,501 942,512 948,525 947,540 960,555 968,578 982,582 978,598 993,608 994,625 998,632 993,650 1008,652 1020,675 1032,693 1032,704 1040,708 1041,728 1047,739 1068,736 1073,745 1071,765 1067,795 1085,806 1092,818 1100,820 1103,835 1130,842 1140,858 1131,878 1140,893 1155,890 1153,876 1162,874 1170,882 1157,897 1162,907 1160,932 1141,935 1137,948 1155,960 1160,967 1168,966 1190,985 1206,998 1205,1015 1212,1030 1196,1028 1193,1040 1202,1060 1210,1052 1222,1053 1240,1062 1253,1080 1255,1098 1267,1112 1275,1106 1285,1091 1297,1100 1312,1096 1332,1107 1345,1098 1360,1075 1368,1073 1380,1058 1405,1050 1415,1037 1440,1027 1455,1022 1465,1010 1485,1022 1478,1042 1495,1060 1508,1057 1515,1043 1530,1030 1800,1030 1800,2150 1630,2200 1615,2262 1595,2262 1571,2235 1530,2202 1512,2182 1500,2178 1488,2182 1480,2172 1470,2176 1448,2158 1436,2160 1428,2178 1418,2188 1424,2202 1412,2222 1390,2245 1382,2270 1368,2268 1350,2277 1343,2264 1320,2258 1310,2264 1285,2265 1280,2280 1268,2278 1260,2262 1243,2243 1215,2253 1213,2275 1217,2285 1208,2295 1203,2310 1190,2315 1183,2325 1190,2340 1189,2350 1196,2360 1196,2382 1202,2392 1200,2412 1222,2422 1226,2435 1243,2456 1238,2475 1245,2490 1243,2508 1257,2522 1252,2535 1240,2535 1237,2548 1243,2570 1236,2580 1232,2612 1240,2625 1258,2642 1250,2655 1245,2668 1230,2670 1215,2655 1198,2658 1195,2642 1175,2636 1160,2642 1140,2645 1112,2657 1100,2653 1092,2637 1097,2628 1080,2612 1068,2590 1083,2582 1080,2560 1088,2543 1068,2538 1072,2515 1062,2498 1058,2475 1040,2487 1010,2497 990,2502 975,2520 970,2533 962,2538 955,2552 930,2563 907,2572 880,2565 868,2548 845,2548 838,2558 820,2567 803,2558 795,2562 783,2553 781,2540 778,2525 795,2510 780,2497 760,2502 742,2490 732,2455 736,2430 744,2415 738,2405 737,2385 712,2382 705,2393 670,2380 660,2390 652,2373 640,2370 600,2364 575,2372 560,2370 525,2365 510,2353 520,2335 528,2325 532,2308 542,2290 538,2275 565,2250 565,2238 572,2220 567,2200 560,2180 555,2170 572,2160 577,2146 590,2137 588,2120 592,2113 615,2118 621,2108 610,2090 613,2065 590,2063 575,2058 558,2046 554,2057 545,2055 535,2062 520,2056 490,2058 478,2048 480,2038 435,2030 444,2000 430,1982 440,1975 438,1950 430,1936 415,1937 408,1920 415,1908 432,1895 420,1885 415,1865 405,1840 373,1835 379,1820 375,1780 388,1778 395,1768 410,1764 433,1740 432,1726 420,1730 380,1732 352,1742 340,1730 300,1733 270,1732 245,1736 205,1742 195,1753 175,1762 155,1768 145,1782 125,1788 115,1800 100,1808 85,1818 82,1810 50,1790 72,1775 78,1760 97,1745 112,1722 105,1707 103,1690 115,1685 105,1670 88,1668 88,1662 103,1652 92,1642 92,1628 52,1630 60,1600 63,1540 60,1532 80,1522 97,1506 120,1506 126,1495 120,1487 108,1475 105,1428 118,1412 127,1395 135,1368 145,1365 155,1380 165,1380 178,1370 188,1353 200,1350 210,1330 222,1326 228,1300 218,1285 235,1270 230,1250 252,1255 270,1273 297,1258 298,1238 312,1230 318,1198 335,1180 362,1193 375,1185 382,1167 375,1145 355,1135 354,1115 347,1102 348,1083 368,1083 370,1098 383,1093 388,1072 384,1055 374,1050 378,1025 390,1003 394,970 397,945 403,935 400,912 393,900 397,860 389,850 397,830 390,800 399,790 395,780 385,777 384,745 378,738 388,715 390,690 382,685 383,660 377,650 380,618 368,613 348,615 346,605 340,595 325,598 303,587 304,620 296,626 292,635 272,634 266,600 248,572 245,560 250,545 232,530 238,520 238,497 223,490 222,465 228,440 223,427 232,407 255,397 255,388 250,372 240,360 267,347 272,365 285,385 289,405 297,441 308,436 312,428 328,424 345,415 357,422 368,410 382,402 382,378 396,363 383,340 375,318 360,315 360,285 352,250 376,235 372,215 365,200 370,175 362,155 382,157 400,143 410,160 418,208 430,211 455,200 458,188 442,180 443,152 468,135 467,120 456,98 456,78 480,75 492,70';

const cols = Array.from({ length: 50 }, (_, i) => 91.5 + i * 17.43);
const rows = Array.from({ length: 51 }, (_, i) => 37.5 + i * 17.4);

function MapCanvas() {
  return (
    <main className="min-w-0 flex-1 overflow-hidden border-t border-[#222] bg-white">
      <svg viewBox="0 0 1030 909" preserveAspectRatio="xMinYMin meet" className="block w-full">
        <rect x="91" y="37" width="855" height="870" fill="#7d8a8e" />
        <g stroke="#232323" strokeWidth="1.3">
          {cols.map((x) => (
            <line key={x} x1={x} x2={x} y1="37" y2="907.500" />
          ))}
          {rows.map((y) => (
            <line key={y} x1="91" x2="946" y1={y} y2={y} />
          ))}
        </g>
        <polygon
          points={outline}
          transform="translate(75 13) scale(.3444 .3333)"
          fill="#91522d"
          stroke="#232323"
          strokeWidth="1.200"
          strokeLinejoin="round"
          vectorEffect="non-scaling-stroke"
        />
      </svg>
    </main>
  );
}

/* ---------- processing dock ---------- */

const algorithms = [
  'Copy Selection to New Features Layer',
  'Delete Selection from Features Layer',
  'Invert Selection of Features Layer',
  'Select by Attributes... (String Expression)',
  'Select by Location...',
  'Select Features from List',
];

const AlgIcon = () => (
  <Svg size={20}>
    <path d="M21 5Q14-1 7 2 0 6 1 13q2 9 11 10 10-1 11-11h-9" stroke="#2a66a8" strokeWidth="3.500" />
    <path d="M18 7Q12 3 8 6q-4 5-1 10 4 4 10 2" stroke="#dbe6f2" strokeWidth="1.800" />
    <path d="M3 4q7 2 10 8t9 9M8 13L20 3" stroke="#8fb3d8" strokeWidth="1.800" />
  </Svg>
);

function RightDock() {
  return (
    <div className="flex w-[533px] shrink-0 flex-col pl-2">
      <DockTitle title="Processing Toolbox" />
      <div className="flex h-8 shrink-0 items-center pl-0.5">
        <MiniButton label="Models">
          <span className="relative flex">
            <Gear color="#d42a2a" hole="#d42a2a" size={12} />
            <span className="absolute top-2 left-2 flex"><Gear color="#7a8a9a" hole="#4a6a9a" size={9} /></span>
          </span>
        </MiniButton>
        <MiniButton label="Scripts">
          <Svg size={18}>
            <path d="M6 2q7-3 9 1v7H7v4H3q-4-5 0-9h3z" fill="#4078b0" />
            <path d="M17 6h3q4 5 0 9h-7v7q-7 1-7-5 0-5 9-5z" fill="#f5d040" />
            <path d="M13 17h11l-5.500 6z" fill="#8a8a8a" />
          </Svg>
        </MiniButton>
        <MiniButton label="History"><ClockIcon size={15} /></MiniButton>
        <MiniButton label="Results">
          <Svg size={15}><path d="M3 1h13l5 5v17H3z" fill="#e8e8e8" /><path d="M6 8h11M6 12h11M6 16h11M6 20h8" stroke="#777" strokeWidth="1.500" /></Svg>
        </MiniButton>
        <span className="mx-0.5 h-3 w-px bg-[#222]" />
        <MiniButton label="Edit In-Place">
          <Svg size={15}><path d="M1 1h15v16l-6 4-9-5z" fill="#fce94f" stroke="#c4a000" /><path d="M21 4L14 22" stroke="#f0b830" strokeWidth="4" /></Svg>
        </MiniButton>
        <span className="mx-0.5 h-3 w-px bg-[#222]" />
        <MiniButton label="Options"><WrenchIcon size={15} /></MiniButton>
      </div>
      <input
        aria-label="Search algorithms"
        className="mt-px h-[27px] shrink-0 border-2 border-[#1c1c1c] bg-[#7c7c7c]"
      />
      <div className="mt-0.5 flex min-h-0 flex-1 border-2 border-[#4d4d4d] bg-[#222]">
        <ul className="flex min-w-0 flex-1 flex-col justify-end overflow-hidden pl-[78px] text-[16px] text-[#dcdcdc]">
          {algorithms.map((name) => (
            <li key={name} className="flex h-[22px] shrink-0 items-center gap-1.5 whitespace-nowrap last:h-[10px] last:items-start last:overflow-hidden">
              <AlgIcon />
              <span className="leading-[22px]">{name}</span>
            </li>
          ))}
        </ul>
        <div className="w-[10px] bg-[#555]">
          <div className="h-[88%] border border-[#555] bg-[#303030]" />
        </div>
      </div>
      <div className="flex h-[27px] shrink-0 items-start font-[Liberation_Mono,monospace] text-[13px] text-[#b1b1b1]">
        <button type="button" className="h-[27px] border border-t-0 border-[#555] px-5 pt-1">Processing Toolbox</button>
        <button type="button" className="h-5 border border-t-0 border-l-0 border-[#555] px-4 pt-0.5">Layer Styling</button>
      </div>
    </div>
  );
}

/* ---------- dialog ---------- */

const Polygon = () => (
  <svg width="20" height="16" viewBox="0 0 20 16" className="shrink-0">
    <path d="M1 3q3-3 6-1 3 2 7 0 4-1 5 0-1 4 0 9-2 2-6 0-3-2-6 1-3 3-6 1 1-5 0-10z" fill="#d9dbd8" stroke="#eee" />
  </svg>
);

// the CJK face centres its ellipsis on the line
const Dotted = () => <span className="font-['Noto_Sans_CJK_SC',sans-serif] leading-none">…</span>;

function Combo({ id, value, polygon, className }: { id: string; value: string; polygon?: boolean; className?: string }) {
  return (
    <div className={clsx('flex min-w-0 flex-1 items-center border border-[#222] bg-linear-to-b from-[#565656] to-[#484848] pl-[5px]', className)}>
      {polygon && <span className="mr-1 flex"><Polygon /></span>}
      <select id={id} className="h-full min-w-0 flex-1 appearance-none bg-transparent pt-0.5">
        <option>{value}</option>
      </select>
      <span className="mr-1.5 flex"><Caret /></span>
    </div>
  );
}

function Tick({ name, checked, focused }: { name: string; checked?: boolean; focused?: boolean }) {
  return (
    <label className="flex h-[18px] items-center">
      <input
        type="checkbox"
        defaultChecked={checked}
        className="h-[18px] w-[18px] appearance-none bg-[#555] checked:bg-[#107000]"
      />
      <span className={clsx('ml-1 border px-[3px] leading-[18px]', focused ? 'border-[#8a6034]' : 'border-transparent')}>{name}</span>
    </label>
  );
}

const flatButton = 'border-2 border-[#262626] px-[5px] h-[27px]';

function LocationDialog() {
  return (
    <section
      role="dialog"
      aria-label="Select by Location"
      className="absolute top-[154px] right-[13px] flex h-[703px] w-[948px] flex-col border border-[#1c77bd] bg-[#323232] font-[Liberation_Mono,monospace] text-[13px] text-[#b1b1b1] shadow-[0_4px_16px_rgba(0,0,0,0.45)]"
    >
      <header className="flex h-[37px] shrink-0 items-center bg-[#1674bd] pl-[9px] font-['Open_Sans','Noto_Sans_CJK_SC',sans-serif] text-[16px] text-white">
        <QgisLogo />
        <h1 className="ml-[5px] flex-1">Select by Location</h1>
        <button type="button" aria-label="Close dialog" className="mr-[15px]">
          <svg width="12" height="12" viewBox="0 0 12 12" stroke="#fff" strokeWidth="1.300"><path d="M0 0l12 12M12 0L0 12" /></svg>
        </button>
      </header>

      <div className="flex min-h-0 flex-1 flex-col p-[13px]">
        <div className="flex min-h-0 flex-1">
          <div className="flex min-w-0 flex-1 flex-col">
            <div className="z-10 -mb-px flex items-end">
              <button type="button" className="h-[27px] w-[118px] border border-b-0 border-[#555] bg-[#323232] pt-1">Parameters</button>
              <button type="button" className="mb-px h-5 w-[61px] border border-b-0 border-l-0 border-[#555] pt-1">Log</button>
            </div>
            <div className="flex-1 border border-[#555] pr-1 pl-[5px]">
              <label htmlFor="source" className="flex h-[27px] items-center">Select features from</label>
              <div className="flex gap-1.5">
                <Combo id="source" value="Grid [EPSG:3857]" polygon className="h-[30px]" />
                <button type="button" className="h-[26px] w-[42px] border border-[#222] bg-[#505050] leading-none"><Dotted /></button>
              </div>
              <p className="flex h-[30px] items-center pt-0.5">Where the features (geometric predicate)</p>
              <div className="grid w-max grid-cols-[107px_auto] gap-y-[9px]">
                <Tick name="intersect" checked />
                <Tick name="touch" />
                <Tick name="contain" focused />
                <Tick name="overlap" checked />
                <Tick name="disjoint" />
                <Tick name="are within" />
                <Tick name="equal" />
                <Tick name="cross" />
              </div>
              <label htmlFor="compare" className="flex h-[30px] items-center pt-0.5">By comparing to the features from</label>
              <div className="flex">
                <Combo id="compare" value="yunnan_WGS84 [EPSG:4326]" polygon className="h-[30px]" />
                <button type="button" aria-label="Iterate over layer" className="ml-3 flex h-[26px] w-5 items-center justify-center">
                  <Svg size={19}>
                    <path d="M10 19H5q-2 0-2-2V8q0-2 2-2h4M14 5h5q2 0 2 2v9q0 2-2 2h-4" stroke="#7fb883" strokeWidth="3" />
                    <path d="M8 1l6 5-6 5zM16 13l-6 5.500 6 5z" fill="#7fb883" />
                  </Svg>
                </button>
                <button type="button" aria-label="Advanced options" className="mr-2.5 ml-4 flex h-[26px] w-5 items-center justify-center">
                  <WrenchIcon />
                </button>
                <button type="button" className="relative h-[26px] w-[42px] border border-[#222] bg-[#505050] leading-none">
                  <Dotted />
                  <span className="absolute right-0.5 bottom-1"><Caret className="fill-[#8a8a8a]" /></span>
                </button>
              </div>
              <label className="mt-[7px] flex h-[18px] items-center text-[#5c5c5c]">
                <input type="checkbox" disabled className="mr-2 h-[18px] w-[18px] appearance-none border border-[#555]" />
                Selected features only
              </label>
              <label htmlFor="modify" className="flex h-[30px] items-center pt-0.5">Modify current selection by</label>
              <div className="flex">
                <Combo id="modify" value="creating new selection" className="h-[26px]" />
              </div>
            </div>
          </div>

          <div className="flex w-4 flex-col items-center justify-center">
            <span className="h-[18px] border-l-2 border-dotted border-[#8a8a8a]" />
          </div>

          <article className="w-[286px] border border-[#555] bg-[#222] pt-1 pr-4 pl-[7px] text-[#6e6e6e]">
            <h2 className="mt-1 mb-2.5 text-[22px] leading-7 font-bold whitespace-nowrap text-[#565656]">Select by location</h2>
            <p className="leading-[17px]">
              This algorithm creates a selection in a vector layer. The criteria for selecting features is based on the
              spatial relationship between each feature and the features in an additional layer.
            </p>
          </article>
        </div>

        <div className="mt-[31px] flex items-center gap-1.5">
          <div role="progressbar" aria-valuenow={0} className="flex h-[31px] flex-1 items-center justify-center border border-[#555] pt-0.5 text-[13px]">0%</div>
          <button type="button" disabled className={clsx(flatButton, 'text-[#5c5c5c]')}>Cancel</button>
        </div>
        <div className="mt-[7px] flex gap-[7px]">
          <button type="button" className={clsx(flatButton, 'mr-auto')}>Run as Batch Process<Dotted /></button>
          <button type="button" className={flatButton}>Run</button>
          <button type="button" className={flatButton}>Close</button>
          <button type="button" className={flatButton}>Help</button>
        </div>
      </div>
    </section>
  );
}

/* ---------- status bar ---------- */

function Spin({ id, value, className }: { id: string; value: string; className: string }) {
  return (
    <div className={clsx('flex h-[27px] items-center border border-[#222] bg-[#484848] px-1.5', className)}>
      <input id={id} defaultValue={value} className="w-0 flex-1 bg-transparent" />
      <span className="flex flex-col gap-1"><Caret up /><Caret /></span>
    </div>
  );
}

function StatusBar() {
  return (
    <footer className="flex h-[37px] shrink-0 items-center pt-0.5 pl-[3px] font-[Liberation_Mono,monospace] text-[12px] text-[#b1b1b1]">
      <div className="flex h-[27px] w-[323px] items-center border border-[#111] bg-[#868686] pl-2 text-[13px]">
        <Svg size={18}><circle cx="9" cy="9" r="6" stroke="#999" strokeWidth="2" /><path d="M14 14l8 8" stroke="#999" strokeWidth="3" /></Svg>
        <input aria-label="Locate" placeholder="Type to locate (Ctrl+K)" className="ml-2 flex-1 bg-transparent placeholder:text-[#4e4e4e]" />
      </div>
      <label htmlFor="coord" className="mr-0.5 ml-auto">Coordinate</label>
      <input id="coord" defaultValue="11860210,3369302" className="h-[27px] w-[127px] border border-[#111] bg-[#868686] px-[5px] text-black" />
      <span className="mx-1 flex">
        <Svg size={20}><path d="M5 1l3 8M11 0l2 9M2 6l4 6" stroke="#fff" strokeWidth="3" /><circle cx="15" cy="15" r="7" fill="#111" stroke="#fff" strokeWidth="2" /><circle cx="15" cy="15" r="3" stroke="#fff" strokeWidth="1.500" /></Svg>
      </span>
      <label htmlFor="scale" className="ml-3">Scale</label>
      <div className="ml-0.5 flex w-[125px]">
        <Combo id="scale" value="1:5425145" className="h-6" />
      </div>
      <svg width="16" height="20" viewBox="0 0 16 20" fill="none" className="ml-3.5"><path d="M4 9V5a4 4 0 0 1 8 0v4" stroke="#b0b0b0" strokeWidth="2" /><rect x="1" y="9" width="14" height="11" fill="#6c6c6c" /></svg>
      <label htmlFor="magnifier" className="mr-1 ml-2">Magnifier</label>
      <Spin id="magnifier" value="100%" className="w-[105px]" />
      <label htmlFor="rotation" className="mr-2 ml-2">Rotation</label>
      <Spin id="rotation" value="0.0 °" className="w-[101px]" />
      <label className="ml-[7px] flex items-center gap-1.5">
        <input type="checkbox" defaultChecked className="h-[18px] w-[18px] appearance-none bg-[#555] checked:bg-[#107000]" />
        Render
      </label>
      <button type="button" className="ml-4 flex items-center">
        <Svg size={19}>
          <circle cx="12" cy="12" r="11" fill="#9a9a9a" />
          <path d="M2 7h20M1 12h22M2 17h20M12 1v22M7 2q-4 10 0 20M17 2q4 10 0 20" stroke="#ddd" />
        </Svg>
        EPSG:3857
      </button>
      <button type="button" aria-label="Messages" className="mr-2 ml-8">
        <Svg size={20}><path d="M14 17h6v7z" fill="#8a8a8a" /><ellipse cx="12" cy="10" rx="11" ry="9" fill="#8a8a8a" /><path d="M6 10h2M11 10h2M16 10h2" stroke="#fff" strokeWidth="2.500" /></Svg>
      </button>
    </footer>
  );
}

/* ---------- markup drawn over the window ---------- */

function Annotations() {
  return (
    <div className="pointer-events-none absolute inset-0 font-['Noto_Sans_CJK_SC',sans-serif] whitespace-nowrap">
      <svg className="absolute inset-0 h-full w-full" fill="#ff2014">
        <path d="M252 754L263 741 266 746 360 711 521 656 521 658 360 722 268 752 270 757z" />
        <path d="M292 796L309 791 310 795 355 809 497 852 496 854 355 816 307 803 304 808z" />
      </svg>
      <p className="absolute top-[639px] left-[536px] text-[33px] leading-[48px] text-[#ff2014]">矢量图层（范围）</p>
      <p className="absolute top-[854px] left-[516px] text-[33px] leading-[48px] text-[#ff2014]">格网图层</p>
      <div className="absolute top-[302px] right-[716px] h-[87px] w-[230px] rounded border-4 border-[#ff2014]" />
      <p className="absolute top-[993px] left-[294px] bg-linear-to-b from-[#9cd0ff] via-[#1c5fb8] to-[#8ac4ff] bg-clip-text text-[26px] leading-[38px] text-transparent drop-shadow-[0_0_1px_#000]">
        此歌曲为没有填词的纯音乐，请您欣赏
      </p>
    </div>
  );
}

const menus: [string, string, string][] = [
  ['Pro', 'j', 'ect'],
  ['', 'E', 'dit'],
  ['', 'V', 'iew'],
  ['', 'L', 'ayer'],
  ['', 'S', 'ettings'],
  ['', 'P', 'lugins'],
  ['Vect', 'o', 'r'],
  ['', 'R', 'aster'],
  ['', 'D', 'atabase'],
  ['', 'W', 'eb'],
  ['', 'M', 'esh'],
  ['Pro', 'c', 'essing'],
  ['', 'H', 'elp'],
  ['栅格(', 'R', ')'],
  ['矢量(', 'O', ')'],
];

export default function App() {
  return (
    <div className="relative flex h-screen flex-col overflow-hidden bg-[#323232] font-['Open_Sans','Noto_Sans_CJK_SC',sans-serif] text-[16px]">
      <header className="flex h-[30px] shrink-0 items-center border-t border-[#1c3c90] bg-white text-[#8c8c8c]">
        <QgisLogo />
        <span className="ml-[5px] flex-1">*Untitled Project — QGIS</span>
        <div className="mr-[26px] flex items-center gap-[46px]">
          <button type="button" aria-label="Minimize"><svg width="12" height="12" stroke="#8c8c8c"><path d="M0 5.500h12" /></svg></button>
          <button type="button" aria-label="Restore"><svg width="13" height="13" fill="none" stroke="#8c8c8c"><path d="M.5 3.500h9v9h-9zM3.500 3V.5h9v9H10" /></svg></button>
          <button type="button" aria-label="Close"><svg width="12" height="12" stroke="#8c8c8c"><path d="M0 0l12 12M12 0L0 12" /></svg></button>
        </div>
      </header>
      <nav className="flex h-[27px] shrink-0 items-center gap-3.5 pl-[9px] text-[#a8a8a8]">
        {menus.map(([before, key, after]) => (
          <button type="button" key={before + key + after}>
            {before}
            <u className="underline-offset-2">{key}</u>
            {after}
          </button>
        ))}
      </nav>
      <MainToolbar />
      <div className="flex min-h-0 flex-1">
        <LayerSourceBar />
        <LeftDock />
        <MapCanvas />
        <RightDock />
      </div>
      <StatusBar />
      <LocationDialog />
      <Annotations />
    </div>
  );
}
